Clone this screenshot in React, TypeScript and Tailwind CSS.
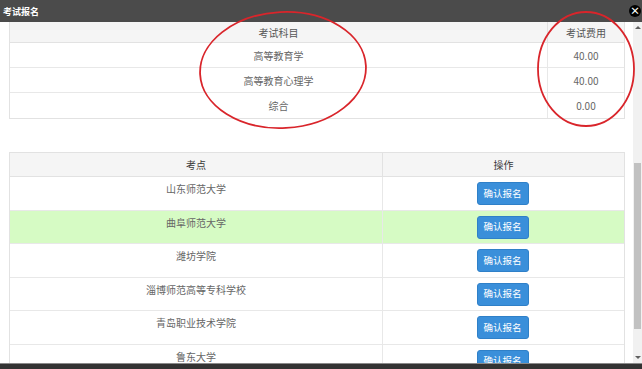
import React from 'react';

const fees = [
  { name: '高等教育学', fee: '40.00' },
  { name: '高等教育心理学', fee: '40.00' },
  { name: '综合', fee: '0.00' },
];

const sites = [
  '山东师范大学',
  '曲阜师范大学',
  '潍坊学院',
  '淄博师范高等专科学校',
  '青岛职业技术学院',
  '鲁东大学',
];

const font = { fontFamily: '"Microsoft YaHei", "Noto Sans CJK SC", "Liberation Sans", sans-serif' };

export default function App() {
  return (
    <div className="relative w-[642px] h-[369px] overflow-hidden bg-white flex flex-col" style={font}>
      {/* Title bar */}
      <div className="h-[22px] shrink-0 bg-[#4b4b4b] flex items-center justify-between pl-[3px] pr-[1px]">
        <span className="text-[9px] font-bold text-white leading-none">考试报名</span>
        <div className="w-[12px] h-[12px] rounded-full bg-black flex items-center justify-center text-white text-[10px] font-bold leading-none">
          ×
        </div>
      </div>

      {/* Body */}
      <div className="flex-1 flex overflow-hidden">
        <div className="w-[625px] pl-[9px] shrink-0">
          {/* Fee table */}
          <div className="border-l border-r border-b border-[#e2e2e2] text-[10px] text-[#666]">
            <div className="grid grid-cols-[538px_76px] h-[21px] bg-[#f5f5f5] border-b border-[#e2e2e2] text-[#555]">
              <div className="flex items-center justify-center border-r border-[#e2e2e2]">考试科目</div>
              <div className="flex items-center justify-center">考试费用</div>
            </div>
            {fees.map((f, i) => (
              <div
                key={f.name}
                className={`grid grid-cols-[538px_76px] h-[25px] ${i < fees.length - 1 ? 'border-b border-[#e8e8e8]' : ''}`}
              >
                <div className="flex items-center justify-center border-r border-[#e8e8e8]">{f.name}</div>
                <div className="flex items-center justify-center">{f.fee}</div>
              </div>
            ))}
          </div>

          {/* Site table */}
          <div className="mt-[33px] border-l border-r border-t border-[#e2e2e2] text-[10px] text-[#666]">
            <div className="grid grid-cols-[373px_241px] h-[24px] bg-[#f5f5f5] border-b border-[#e2e2e2] text-[#3a3a3a]">
              <div className="flex items-center justify-center border-r border-[#e2e2e2]">考点</div>
              <div className="flex items-center justify-center">操作</div>
            </div>
            {sites.map((s, i) => (
              <div
                key={s}
                className={`grid grid-cols-[373px_241px] h-[33.5px] border-b border-[#e8e8e8] ${i === 1 ? 'bg-[#d6fbc4]' : ''}`}
              >
                <div className="flex justify-center pt-[7px] border-r border-[#e8e8e8] leading-none">{s}</div>
                <div className="flex justify-center pt-[5px]">
                  <button className="ml-[-2px] w-[52px] h-[23px] rounded-[3px] bg-[#3a8fda] border border-[#2f80c8] text-white text-[9.5px] leading-none">
                    确认报名
                  </button>
                </div>
              </div>
            ))}
          </div>
        </div>

        <div className="flex-1" />

        {/* Scrollbar */}
        <div className="w-[9px] shrink-0 bg-[#f1f1f1] flex flex-col items-center">
          <div className="mt-[4px] w-0 h-0 border-l-[3px] border-r-[3px] border-b-[3px] border-l-transparent border-r-transparent border-b-[#606060]" />
          <div className="mt-[134px] w-[7px] h-[166px] bg-[#c1c1c1]" />
          <div className="mt-auto mb-[4px] w-0 h-0 border-l-[3px] border-r-[3px] border-t-[3px] border-l-transparent border-r-transparent border-t-[#606060]" />
        </div>
      </div>

      {/* Bottom edge */}
      <div className="h-[6px] shrink-0 border-t border-[#8a8a8a] bg-[#333]" />

      {/* Hand-drawn annotations */}
      <svg className="absolute inset-0 pointer-events-none" width="642" height="369">
        <ellipse cx="283" cy="70" rx="83" ry="58" fill="none" stroke="#d9252b" strokeWidth="1.8" transform="rotate(-3 283 70)" />
        <ellipse cx="586" cy="69" rx="48" ry="57" fill="none" stroke="#d9252b" strokeWidth="1.8" />
      </svg>
    </div>
  );
}
